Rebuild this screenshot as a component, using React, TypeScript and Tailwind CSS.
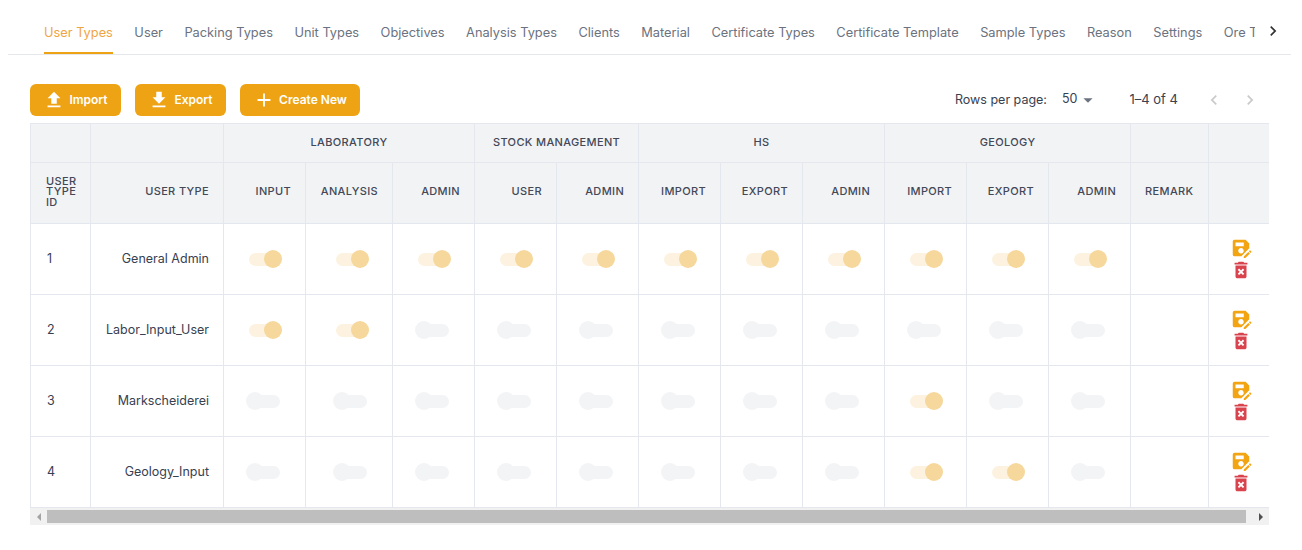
import React from "react";
import { MdFileUpload, MdFileDownload, MdAdd, MdSaveAs, MdDeleteForever, MdChevronLeft, MdChevronRight, MdArrowDropDown } from "react-icons/md";

const tabs = ["User Types", "User", "Packing Types", "Unit Types", "Objectives", "Analysis Types", "Clients", "Material", "Certificate Types", "Certificate Template", "Sample Types", "Reason", "Settings", "Ore Types"];
const widths = [60, 133, 82, 87, 82, 82, 82, 82, 82, 82, 82, 82, 82, 78, 80];
const subHeads = ["INPUT", "ANALYSIS", "ADMIN", "USER", "ADMIN", "IMPORT", "EXPORT", "ADMIN", "IMPORT", "EXPORT", "ADMIN"];
const rows: { id: number; name: string; on: number[] }[] = [
  { id: 1, name: "General Admin", on: [0, 1, 2, 3, 4, 5, 6, 7, 8, 9, 10] },
  { id: 2, name: "Labor_Input_User", on: [0, 1] },
  { id: 3, name: "Markscheiderei", on: [8] },
  { id: 4, name: "Geology_Input", on: [8, 9] },
];

function Toggle({ on }: { on: boolean }) {
  return (
    <span className="relative inline-block h-[18px] w-[36px] align-middle">
      <span className={`absolute left-[3px] top-[2.5px] h-[13px] w-[31px] rounded-full ${on ? "bg-[#fcf2df]" : "bg-[#f3f4f6]"}`} />
      <span className={`absolute top-0 h-[18px] w-[18px] rounded-full ${on ? "left-[18px] bg-[#f6d79c]" : "left-0 bg-[#f3f4f6]"}`} />
    </span>
  );
}

function Btn({ icon, label, w }: { icon: React.ReactNode; label: string; w: string }) {
  return (
    <button className={`flex h-8 items-center justify-center gap-[4px] rounded-md bg-[#eea315] text-[12px] font-semibold text-white ${w}`}>
      {icon}
      {label}
    </button>
  );
}

const th = "border border-[#e5e7ef] bg-[#f2f3f5] text-[11px] font-medium tracking-[0.35px] text-[#434857]";

export default function App() {
  return (
    <div className="h-[550px] w-[1302px] overflow-hidden bg-white font-['Inter',sans-serif]">
      <div className="mx-2 flex h-[55px] w-[1283px] items-start border-b border-[#e5e7eb]">
        <div className="ml-9 flex w-[1211px] gap-[21.5px] overflow-hidden">
          {tabs.map((t, i) => (
            <div
              key={t}
              className={`h-[54px] shrink-0 whitespace-nowrap border-b-2 pt-[25px] text-[12.8px] leading-4 ${i === 0 ? "border-[#eea315] text-[#f0a544]" : "border-transparent text-[#6b7280]"}`}
            >
              {t}
            </div>
          ))}
        </div>
        <MdChevronRight className="ml-[8px] mt-[21px] text-[#333]" size={20} />
      </div>

      <div className="mx-[30px] mt-[29px] flex h-8 items-center">
        <div className="flex gap-[14px]">
          <Btn w="w-[91px]" label="Import" icon={<MdFileUpload size={22} />} />
          <Btn w="w-[91px]" label="Export" icon={<MdFileDownload size={22} />} />
          <Btn w="w-[120px]" label="Create New" icon={<MdAdd size={22} />} />
        </div>
        <div className="ml-auto flex items-center text-[12.5px] text-[#374151]">
          <span>Rows per page:</span>
          <span className="mb-[2px] ml-[15px]">50</span>
          <MdArrowDropDown className="text-[#6b7280]" size={22} />
          <span className="ml-[30px] mr-[26px] text-[13px]">1–4 of 4</span>
          <MdChevronLeft className="text-[#c9c9c9]" size={20} />
          <MdChevronRight className="ml-[16px] mr-[12px] text-[#c9c9c9]" size={20} />
        </div>
      </div>

      <div className="ml-[30px] mt-[7px] w-[1239px]">
        <div className="w-full overflow-hidden">
          <table className="w-[1258px] table-fixed border-collapse">
            <colgroup>
              {widths.map((w, i) => (
                <col key={i} style={{ width: w }} />
              ))}
            </colgroup>
            <thead>
              <tr className="h-[39px]">
                <th className={th} />
                <th className={th} />
                <th className={`${th} pb-[2px]`} colSpan={3}>LABORATORY</th>
                <th className={`${th} pb-[2px]`} colSpan={2}>STOCK MANAGEMENT</th>
                <th className={`${th} pb-[2px]`} colSpan={3}>HS</th>
                <th className={`${th} pb-[2px]`} colSpan={3}>GEOLOGY</th>
                <th className={th} />
                <th className={th} />
              </tr>
              <tr className="h-[61px]">
                <th className={`${th} pb-[3px] pl-[15px] text-left leading-[10.5px]`}>USER<br />TYPE<br />ID</th>
                <th className={`${th} pb-[3px] pr-[14px] text-right`}>USER TYPE</th>
                {subHeads.map((h, i) => (
                  <th key={i} className={`${th} pb-[3px] pr-[14px] text-right`}>{h}</th>
                ))}
                <th className={`${th} pb-[3px] pl-[14px] text-left`}>REMARK</th>
                <th className={th} />
              </tr>
            </thead>
            <tbody>
              {rows.map((r) => (
                <tr key={r.id} className="h-[71px] text-[12.5px] text-[#374151]">
                  <td className="border border-[#e5e7ef] pl-[16px]">{r.id}</td>
                  <td className="border border-[#e5e7ef] pr-[14px] text-right">{r.name}</td>
                  {subHeads.map((_, i) => (
                    <td key={i} className="border border-[#e5e7ef] pr-[23px] text-right">
                      <Toggle on={r.on.includes(i)} />
                    </td>
                  ))}
                  <td className="border border-[#e5e7ef]" />
                  <td className="border border-[#e5e7ef]">
                    <div className="ml-[22px] flex w-[20px] flex-col items-center">
                      <MdSaveAs className="text-[#f2a413]" size={22} />
                      <MdDeleteForever className="text-[#d9434e]" size={22} />
                    </div>
                  </td>
                </tr>
              ))}
            </tbody>
          </table>
        </div>
        <div className="flex h-[17px] items-center bg-[#f1f1f1]">
          <div className="flex w-[17px] justify-center">
            <span className="h-0 w-0 border-y-[4px] border-r-[4px] border-y-transparent border-r-[#a3a3a3]" />
          </div>
          <div className="h-[13px] flex-1 bg-[#bebebe]" />
          <div className="ml-[6px] flex w-[17px] justify-center">
            <span className="h-0 w-0 border-y-[4px] border-l-[4px] border-y-transparent border-l-[#505050]" />
          </div>
        </div>
      </div>
    </div>
  );
}
